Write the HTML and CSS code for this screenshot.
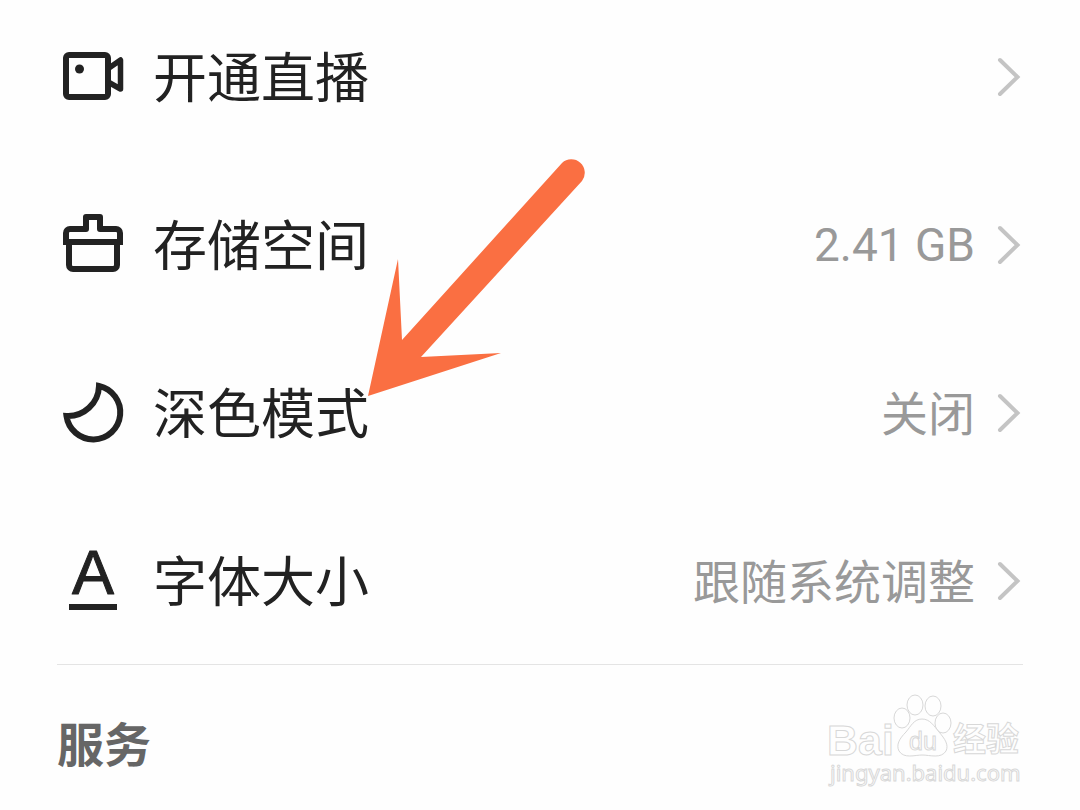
FILE: index.html
```html
<!DOCTYPE html>
<html lang="zh-CN">

<head>
    <meta charset="UTF-8">
    <meta name="viewport" content="width=device-width, initial-scale=1">
    <title>设置</title>
    <link rel="stylesheet" href="styles.css">
</head>

<body>
    <main class="page">
        <nav class="menu">
            <a class="row" href="#live">
                <svg class="icon" viewBox="0 0 72 72" aria-hidden="true">
                    <rect x="9" y="14" width="42" height="42" rx="3" />
                    <path d="M52 27L63.500 19V48L52 41.500" stroke-width="5.500" />
                    <circle class="solid" cx="22.500" cy="28" r="4.500" />
                </svg>
                <span class="name">开通直播</span>
                <svg class="chevron" viewBox="0 0 28 72" aria-hidden="true"><path d="M5 19L22.500 36L5 53" /></svg>
            </a>
            <a class="row" href="#storage">
                <svg class="icon" viewBox="0 0 72 72" aria-hidden="true">
                    <path d="M9 36V24a4 4 0 0 1 4-4H29V8H43V20H59a4 4 0 0 1 4 4V36" />
                    <path d="M8 33H64" />
                    <path d="M12 34V56a4 4 0 0 0 4 4H56a4 4 0 0 0 4-4V34" />
                </svg>
                <span class="name">存储空间</span>
                <span class="value latin">2.41 GB</span>
                <svg class="chevron" viewBox="0 0 28 72" aria-hidden="true"><path d="M5 19L22.500 36L5 53" /></svg>
            </a>
            <a class="row" href="#dark">
                <svg class="icon" viewBox="0 0 72 72" aria-hidden="true">
                    <path class="sharp" d="M42 9A27 27 0 1 1 9.500 39A31 31 0 0 0 42 9Z" />
                </svg>
                <span class="name">深色模式</span>
                <span class="value">关闭</span>
                <svg class="chevron" viewBox="0 0 28 72" aria-hidden="true"><path d="M5 19L22.500 36L5 53" /></svg>
            </a>
            <a class="row" href="#font-size">
                <svg class="icon" viewBox="0 0 72 72" aria-hidden="true">
                    <text class="letter" x="36" y="49" text-anchor="middle">A</text>
                    <path class="sharp" d="M12 62H60" />
                </svg>
                <span class="name">字体大小</span>
                <span class="value">跟随系统调整</span>
                <svg class="chevron" viewBox="0 0 28 72" aria-hidden="true"><path d="M5 19L22.500 36L5 53" /></svg>
            </a>
        </nav>

        <h2 class="section-title">服务</h2>

        <!-- pointer to the dark mode row -->
        <svg class="arrow" viewBox="0 0 220 240" aria-hidden="true">
            <path d="M0 238L30 101L34 182L194 5A13.500 13.500 0 0 1 214 23L53 199L133 195Z" />
        </svg>

        <svg class="watermark" viewBox="0 0 200 100" aria-hidden="true">
            <text class="brand" x="2" y="65">Bai</text>
            <ellipse cx="77" cy="28" rx="8" ry="10" />
            <ellipse cx="90" cy="15" rx="8" ry="10" />
            <ellipse cx="108" cy="16" rx="8" ry="10" />
            <ellipse cx="118" cy="33" rx="8" ry="10" />
            <path d="M97 29C89 29 86 36 81 42C74 49 71 55 74 61C79 69 90 65 97 65C105 65 116 69 121 61C124 55 120 49 114 42C109 36 105 29 97 29Z" />
            <text class="du" x="98" y="60" text-anchor="middle">du</text>
            <text class="brand-cn" x="128" y="61">经验</text>
            <text class="site" x="5" y="91">jingyan.baidu.com</text>
        </svg>
    </main>
</body>

</html>
```
FILE: styles.css
```css
* {
    box-sizing: border-box;
    margin: 0;
    padding: 0;
}

body {
    background-color: #fefefe;
    color: #222;
    font-family: Roboto, "Noto Sans CJK SC", sans-serif;
}

.page {
    position: relative;
    padding: 0 57px 30px;
}

.menu {
    display: flex;
    flex-direction: column;
    gap: 96px;
    padding: 41px 0 47px;
    border-bottom: 1px solid #e4e4e4;
}

.row {
    display: flex;
    align-items: center;
    height: 72px;
    color: inherit;
    text-decoration: none;
}

.icon {
    flex: none;
    width: 72px;
    height: 72px;
    margin-right: 24px;
    fill: none;
    stroke: #222;
    stroke-width: 6;
    stroke-linejoin: round;
}

.icon .sharp {
    stroke-linejoin: miter;
}

.icon .solid {
    fill: #222;
    stroke: none;
}

.icon .letter {
    fill: #222;
    stroke-width: 1;
    font-family: "Liberation Sans", sans-serif;
    font-size: 63px;
}

.name {
    flex: 1;
    padding-top: 6px;
    font-size: 54px;
    line-height: 66px;
}

.value {
    padding-top: 4px;
    color: #999;
    font-size: 47px;
    line-height: 68px;
}

.value.latin {
    padding-top: 0;
    font-size: 46px;
}

.chevron {
    flex: none;
    width: 28px;
    height: 72px;
    margin-left: 20px;
    fill: none;
    stroke: #c4c4c4;
    stroke-width: 4;
    stroke-linecap: round;
}

.section-title {
    padding-top: 47px;
    color: #666;
    font-size: 47px;
    font-weight: bold;
    line-height: 68px;
}

.arrow {
    position: absolute;
    top: 158px;
    left: 368px;
    width: 220px;
    height: 240px;
    fill: #fa6f42;
}

.watermark {
    position: absolute;
    top: 690px;
    right: 55px;
    width: 200px;
    height: 100px;
    fill: #fefefe;
    stroke: #d8d8d8;
    stroke-width: 1;
}

.brand {
    font-family: "Liberation Sans", sans-serif;
    font-size: 43px;
    font-weight: bold;
}

.du {
    font-family: "Liberation Sans", sans-serif;
    font-size: 25px;
}

.brand-cn {
    font-family: "Noto Sans CJK SC", sans-serif;
    font-size: 33px;
    font-weight: bold;
}

.site {
    font-family: "Noto Sans", sans-serif;
    font-size: 22px;
}
```
